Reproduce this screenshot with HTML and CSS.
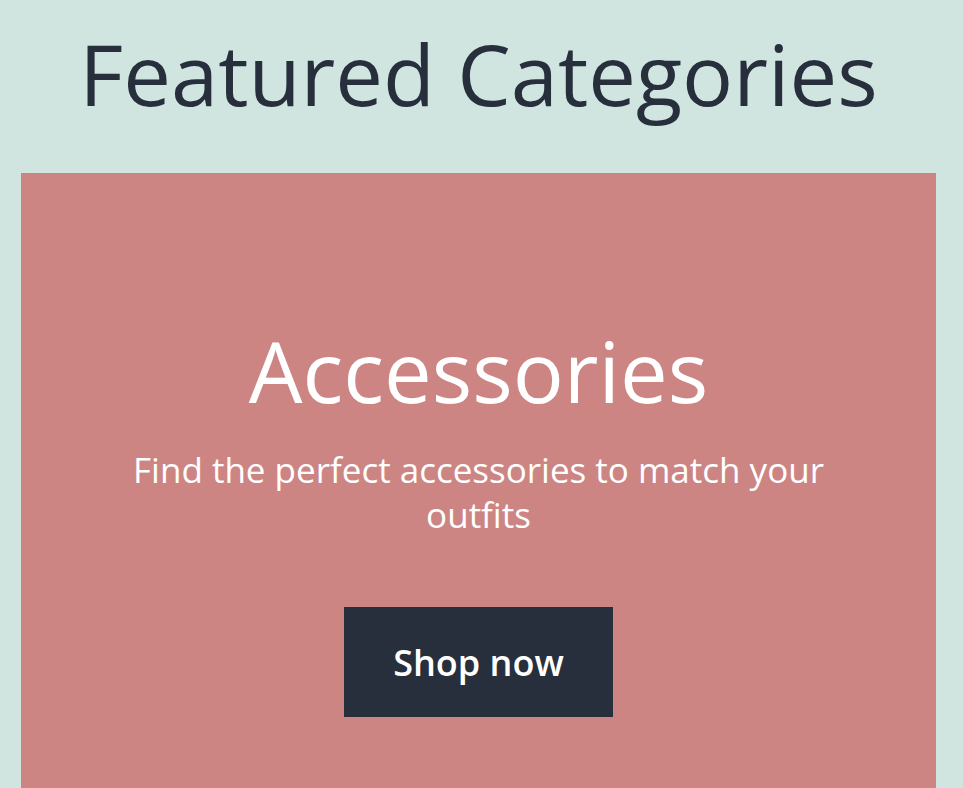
FILE: index.html
```html
<!DOCTYPE html>
<html>
<head>
<meta charset="utf-8">
<link rel="stylesheet" href="styles.css">
</head>
<body>
<section class="featured">
  <h1 class="title">Featured Categories</h1>
  <div class="card">
    <h2 class="card-title">Accessories</h2>
    <p class="card-text">Find the perfect accessories to match your outfits</p>
    <a class="btn" href="#">Shop now</a>
  </div>
</section>
</body>
</html>
```

FILE: styles.css
```css
html, body {
  margin: 0;
  padding: 0;
}
body {
  background: #d1e5e0;
  font-family: "Open Sans", "Noto Sans", sans-serif;
  height: 788px;
  overflow: hidden;
}
.featured {
  padding: 0 27px 0 21px;
}
.title {
  margin: 0;
  height: 173px;
  text-align: center;
  font-weight: 400;
  font-size: 85px;
  line-height: 146px;
  color: #272f3d;
}
.card {
  background: #cd8584;
  height: 615px;
  display: flex;
  flex-direction: column;
  align-items: center;
  padding-top: 142px;
  box-sizing: border-box;
  text-align: center;
  color: #fff;
}
.card-title {
  margin: 0;
  font-size: 85px;
  font-weight: 400;
  line-height: 110px;
}
.card-text {
  margin: 22px 0 0;
  width: 720px;
  font-size: 35px;
  line-height: 45px;
}
.btn {
  margin-top: 70px;
  width: 269px;
  height: 110px;
  display: flex;
  align-items: center;
  justify-content: center;
  background: #272f3d;
  color: #fff;
  text-decoration: none;
  font-size: 36px;
  font-weight: 600;
}
```
